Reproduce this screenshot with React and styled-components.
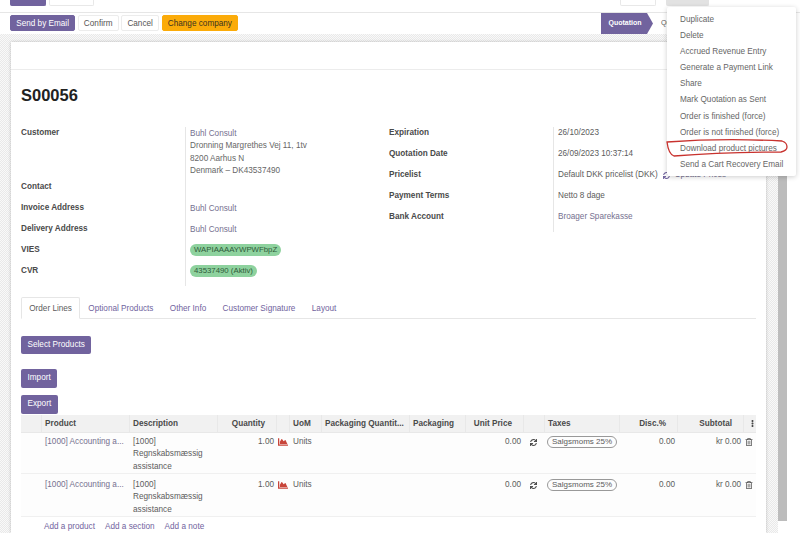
import styled, { createGlobalStyle } from "styled-components";
import { FaChartArea, FaEllipsisV, FaRegTrashAlt, FaSync } from "react-icons/fa";

const COLUMNS =
  "21px 88px 88px 59px 13px 32px 88px 56px 58px 21px 75px 58px 66px 12px";

const GlobalStyle = createGlobalStyle`
  html, body {
    margin: 0;
    padding: 0;
    background: #fff;
  }
  body {
    font-family: "Liberation Sans", Arial, sans-serif;
    font-size: 8.2px;
    line-height: 12.5px;
    color: #5c5c5c;
  }
`;

const menuItems = [
  "Duplicate",
  "Delete",
  "Accrued Revenue Entry",
  "Generate a Payment Link",
  "Share",
  "Mark Quotation as Sent",
  "Order is finished (force)",
  "Order is not finished (force)",
  "Download product pictures",
  "Send a Cart Recovery Email",
];

const lines = [1, 2];

const App = () => {
  return (
    <Page>
      <GlobalStyle />
      <TopBar>
        <TopGroup>
          <ClippedButton $width={36} $primary />
          <ClippedButton $width={45} />
        </TopGroup>
        <TopGroup>
          <ClippedButton $width={36} />
          <ClippedButton $width={43} $active $gap={7} />
          <TopSpacer />
        </TopGroup>
      </TopBar>

      <ActionBar>
        <Actions>
          <ActionButton $kind="primary">Send by Email</ActionButton>
          <ActionButton>Confirm</ActionButton>
          <ActionButton>Cancel</ActionButton>
          <ActionButton $kind="warning">Change company</ActionButton>
        </Actions>
        <StatusBar>
          <StatusCurrent>Quotation</StatusCurrent>
          <StatusNext>Quotation Sent</StatusNext>
        </StatusBar>
      </ActionBar>

      <Main>
        <Sheet>
          <SheetStrip />
          <Title>S00056</Title>

          <FormGrid>
            <FormGroup $valueTop={1.2}>
              <Label>Customer</Label>
              <Value>
                <Link>Buhl Consult</Link>
                <Address>
                  Dronning Margrethes Vej 11, 1tv
                  <br />
                  8200 Aarhus N
                  <br />
                  Denmark – DK43537490
                </Address>
              </Value>
              <Label>Contact</Label>
              <Value />
              <Label>Invoice Address</Label>
              <Value>
                <Link>Buhl Consult</Link>
              </Value>
              <Label>Delivery Address</Label>
              <Value>
                <Link>Buhl Consult</Link>
              </Value>
              <Label>VIES</Label>
              <Value>
                <Badge>WAPIAAAAYWPWFbpZ</Badge>
              </Value>
              <Label>CVR</Label>
              <Value>
                <Badge>43537490 (Aktiv)</Badge>
              </Value>
            </FormGroup>

            <FormGroup $valueTop={0.6}>
              <Label>Expiration</Label>
              <Value>26/10/2023</Value>
              <Label>Quotation Date</Label>
              <Value>26/09/2023 10:37:14</Value>
              <Label>Pricelist</Label>
              <Value>
                <Inline>
                  Default DKK pricelist (DKK)
                  <UpdateIcon />
                  <Link>Update Prices</Link>
                </Inline>
              </Value>
              <Label>Payment Terms</Label>
              <Value>Netto 8 dage</Value>
              <Label>Bank Account</Label>
              <Value>
                <Link>Broager Sparekasse</Link>
              </Value>
            </FormGroup>
          </FormGrid>

          <Tabs>
            <Tab $active>Order Lines</Tab>
            <Tab>Optional Products</Tab>
            <Tab>Other Info</Tab>
            <Tab>Customer Signature</Tab>
            <Tab>Layout</Tab>
          </Tabs>

          <SelectButton>Select Products</SelectButton>
          <ImportButton>Import</ImportButton>
          <ExportButton>Export</ExportButton>

          <LinesTable>
            <HeaderRow>
              <HeadCell />
              <HeadCell>Product</HeadCell>
              <HeadCell>Description</HeadCell>
              <HeadCell $right>Quantity</HeadCell>
              <HeadCell />
              <HeadCell>UoM</HeadCell>
              <HeadCell>Packaging Quantit...</HeadCell>
              <HeadCell>Packaging</HeadCell>
              <HeadCell $right>Unit Price</HeadCell>
              <HeadCell />
              <HeadCell>Taxes</HeadCell>
              <HeadCell $right>Disc.%</HeadCell>
              <HeadCell $right>Subtotal</HeadCell>
              <HeadCell $last>
                <FaEllipsisV size={7} />
              </HeadCell>
            </HeaderRow>

            {lines.map((line) => (
              <LineRow key={line} $second={line === 2}>
                <Cell />
                <Cell>
                  <ProductLink>[1000] Accounting a...</ProductLink>
                </Cell>
                <Cell>
                  [1000]
                  <br />
                  Regnskabsmæssig
                  <br />
                  assistance
                </Cell>
                <Cell $right>1.00</Cell>
                <IconCell $offset={1}>
                  <FaChartArea size={10} color="#c8453a" />
                </IconCell>
                <Cell>Units</Cell>
                <Cell />
                <Cell />
                <Cell $right>0.00</Cell>
                <IconCell $offset={6}>
                  <FaSync size={7} color="#4a4a4a" />
                </IconCell>
                <Cell>
                  <TaxPill>Salgsmoms 25%</TaxPill>
                </Cell>
                <Cell $right>0.00</Cell>
                <Cell $right>kr 0.00</Cell>
                <IconCell $offset={1}>
                  <FaRegTrashAlt size={8} color="#555" />
                </IconCell>
              </LineRow>
            ))}

            <AddRow>
              <AddLink>Add a product</AddLink>
              <AddLink>Add a section</AddLink>
              <AddLink>Add a note</AddLink>
            </AddRow>
          </LinesTable>
        </Sheet>
        <ScrollRail>
          <ScrollThumb />
        </ScrollRail>
      </Main>

      <ActionMenu>
        {menuItems.map((item) => (
          <MenuItem key={item}>{item}</MenuItem>
        ))}
      </ActionMenu>

      <Scribble viewBox="0 0 126 20" fill="none">
        <path
          d="M2 3C30 1 78 0 117 2c3 1 5 3 5 6 0 3-2 4-6 5-30 0-72 1-107 4-3-1-6-6-7-14z"
          stroke="#c8322e"
          strokeWidth="1.3"
        />
      </Scribble>
    </Page>
  );
};

const Page = styled.div`
  position: relative;
  width: 800px;
  height: 533px;
  overflow: hidden;
  display: flex;
  flex-direction: column;
`;

const TopBar = styled.div`
  height: 12px;
  box-sizing: content-box;
  border-bottom: 1px solid #e6e6e6;
  display: flex;
  justify-content: space-between;
  padding: 0 0 0 10px;
  overflow: hidden;
`;

const TopGroup = styled.div`
  display: flex;
  gap: 3px;
  align-items: flex-start;
`;

const TopSpacer = styled.div`
  width: 88px;
`;

const ClippedButton = styled.div`
  width: ${(props) => props.$width}px;
  height: 6px;
  margin-left: ${(props) => props.$gap || 0}px;
  box-sizing: border-box;
  border-radius: 0 0 2px 2px;
  border: 1px solid ${(props) => (props.$primary ? "#71639e" : props.$active ? "#e2e2e2" : "#e8e8e8")};
  border-top: 0;
  background: ${(props) => (props.$primary ? "#71639e" : props.$active ? "#e2e2e2" : "#fff")};
`;

const ActionBar = styled.div`
  height: 21px;
  display: flex;
  justify-content: space-between;
  padding-left: 10px;
`;

const Actions = styled.div`
  display: flex;
  gap: 2.5px;
  padding-top: 2px;
  align-items: flex-start;
`;

const ActionButton = styled.button`
  height: 16px;
  padding: 1px 5.2px 0;
  font: inherit;
  line-height: 13px;
  border-radius: 2px;
  border: 1px solid
    ${(props) =>
      props.$kind === "primary"
        ? "#71639e"
        : props.$kind === "warning"
          ? "#fbab09"
          : "#ececec"};
  background: ${(props) =>
    props.$kind === "primary"
      ? "#71639e"
      : props.$kind === "warning"
        ? "#fbab09"
        : "#fff"};
  color: ${(props) =>
    props.$kind === "primary" ? "#fff" : props.$kind === "warning" ? "#3a3320" : "#555"};
`;

const StatusBar = styled.div`
  width: 199px;
  display: flex;
  align-items: center;
  overflow: hidden;
`;

const StatusCurrent = styled.div`
  width: 52px;
  height: 21px;
  flex: none;
  display: flex;
  align-items: center;
  justify-content: center;
  padding-right: 4px;
  box-sizing: border-box;
  background: #71639e;
  clip-path: polygon(0 0, 46px 0, 100% 50%, 46px 100%, 0 100%);
  color: #fff;
  font-size: 7px;
  font-weight: 700;
`;

const StatusNext = styled.div`
  margin-left: 8px;
  white-space: nowrap;
  font-size: 7.2px;
`;

const Main = styled.div`
  flex: 1;
  width: 787px;
  min-height: 0;
  display: flex;
  background: repeating-conic-gradient(#e9e9e9 0 25%, #f9f9f9 0 50%) 0 0 / 2px 2px;
`;

const Sheet = styled.div`
  width: 755px;
  margin: 8px 12px 0 11px;
  box-sizing: border-box;
  padding: 0 10px;
  background: #fff;
  box-shadow: 0 0 3px rgba(0, 0, 0, 0.22);
  overflow: hidden;
`;

const SheetStrip = styled.div`
  height: 27px;
  margin: 0 -10px;
  border-bottom: 1px solid #ececec;
`;

const Title = styled.h1`
  margin: 16px 0 0;
  height: 18px;
  font-size: 16.5px;
  line-height: 18px;
  font-weight: 700;
  color: #222;
`;

const FormGrid = styled.div`
  margin-top: 22.6px;
  display: grid;
  grid-template-columns: 368px 1fr;
  align-items: start;
`;

const FormGroup = styled.div`
  --value-top: ${(props) => props.$valueTop}px;
  display: grid;
  grid-template-columns: 163.5px 1fr;
  grid-auto-rows: minmax(21px, auto);
`;

const Label = styled.div`
  font-weight: 700;
  color: #4a4a4a;
`;

const Value = styled.div`
  border-left: 1px solid #e6e6e6;
  padding: var(--value-top) 0 0 4.5px;
`;

const Link = styled.span`
  color: #75708f;
`;

const Address = styled.div`
  margin-bottom: 2.8px;
  color: #666;
`;

const Inline = styled.div`
  display: flex;
  align-items: center;
  gap: 5px;
  white-space: nowrap;
`;

const UpdateIcon = styled(FaSync).attrs({ size: 7, color: "#71639e" })``;

const Badge = styled.span`
  display: block;
  width: fit-content;
  margin-top: -1px;
  padding: 0 4px;
  height: 12px;
  line-height: 12px;
  font-size: 7.8px;
  border-radius: 6px;
  background: #8ed29e;
  color: #2f5a3a;
`;

const Tabs = styled.div`
  margin-top: 11.4px;
  height: 22px;
  box-sizing: border-box;
  border-bottom: 1px solid #e6e6e6;
  display: flex;
`;

const Tab = styled.div`
  height: 22px;
  box-sizing: border-box;
  padding: 0 7.2px;
  line-height: 22px;
  border: 1px solid ${(props) => (props.$active ? "#e6e6e6" : "transparent")};
  border-bottom-color: ${(props) => (props.$active ? "#fff" : "transparent")};
  border-radius: 2px 2px 0 0;
  color: ${(props) => (props.$active ? "#5c5c5c" : "#71639e")};
`;

const PurpleButton = styled.button`
  display: block;
  padding: 0 6.5px;
  font: inherit;
  border: 0;
  border-radius: 2px;
  background: #71639e;
  color: #fff;
`;

const SelectButton = styled(PurpleButton)`
  margin-top: 17px;
  height: 18px;
`;

const ImportButton = styled(PurpleButton)`
  margin-top: 15px;
  height: 19px;
`;

const ExportButton = styled(PurpleButton)`
  margin-top: 7px;
  height: 19px;
`;

const LinesTable = styled.div`
  margin-top: 1px;
  width: 735px;
`;

const HeaderRow = styled.div`
  display: grid;
  grid-template-columns: ${COLUMNS};
  height: 18px;
  box-sizing: border-box;
  background: #f1f1f1;
  border-bottom: 1px solid #e8e8e8;
`;

const HeadCell = styled.div`
  padding: 0 ${(props) => (props.$right ? 11 : 3)}px 0 3px;
  line-height: 18px;
  font-weight: 700;
  color: #4a4a4a;
  white-space: nowrap;
  overflow: hidden;
  text-align: ${(props) => (props.$right ? "right" : "left")};
  border-right: 1px solid #e8e8e8;
  ${(props) => props.$last && "display: flex; align-items: center; justify-content: center; padding: 0 0 0 4px; border: 0;"}
`;

const LineRow = styled.div`
  display: grid;
  grid-template-columns: ${COLUMNS};
  height: ${(props) => (props.$second ? 43 : 41)}px;
  box-sizing: border-box;
  padding-top: ${(props) => (props.$second ? 5 : 3)}px;
  border-bottom: 1px solid #f0f0f0;
  background: #fdfdfd;
`;

const Cell = styled.div`
  padding: 0 3px;
  white-space: nowrap;
  text-align: ${(props) => (props.$right ? "right" : "left")};
`;

const IconCell = styled.div`
  height: 12.5px;
  display: flex;
  align-items: center;
  padding-left: ${(props) => props.$offset}px;
`;

const ProductLink = styled.span`
  color: #75708f;
`;

const TaxPill = styled.span`
  display: inline-block;
  margin-left: -1px;
  padding: 0 4px;
  height: 12px;
  line-height: 10px;
  font-size: 8px;
  box-sizing: border-box;
  border: 1px solid #999;
  border-radius: 6px;
  white-space: nowrap;
`;

const AddRow = styled.div`
  display: flex;
  gap: 10px;
  padding: 4px 0 0 23px;
`;

const AddLink = styled.span`
  color: #71639e;
`;

const ScrollRail = styled.div`
  width: 9px;
  flex: none;
  display: flex;
  flex-direction: column;
  background: #fff;
`;

const ScrollThumb = styled.div`
  height: 487px;
  background: #bcbcbc;
`;

const ActionMenu = styled.ul`
  position: absolute;
  top: 7px;
  left: 667px;
  width: 129px;
  height: 169px;
  margin: 0;
  padding: 4.5px 0 0;
  box-sizing: border-box;
  list-style: none;
  background: #fff;
  border-radius: 2px;
  box-shadow: 0 1px 5px rgba(0, 0, 0, 0.2);
`;

const MenuItem = styled.li`
  height: 16.2px;
  line-height: 16.2px;
  padding-left: 13px;
  white-space: nowrap;
  color: #666;
`;

const Scribble = styled.svg`
  position: absolute;
  top: 139px;
  left: 665px;
  width: 126px;
  height: 20px;
`;

export default App;
